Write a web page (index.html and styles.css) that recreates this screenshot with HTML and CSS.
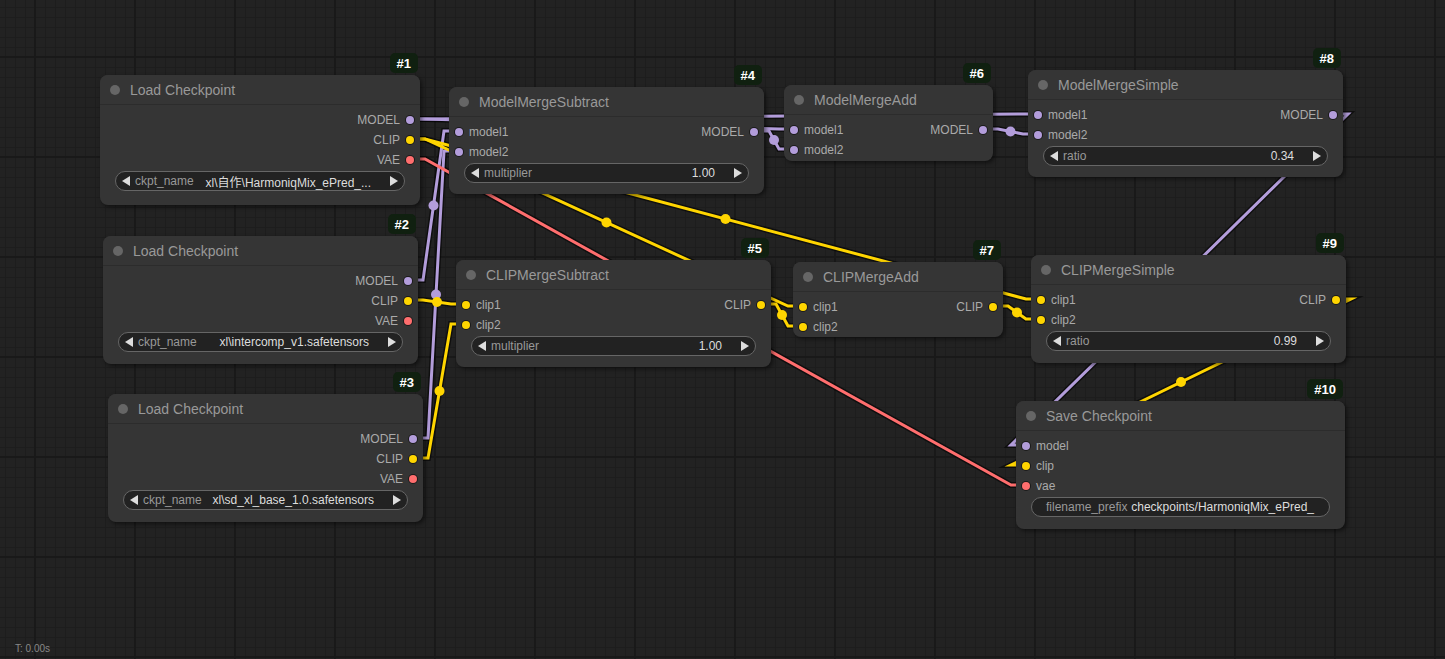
FILE: index.html
```html
<!DOCTYPE html>
<html>
<head>
<meta charset="utf-8">
<link rel="stylesheet" href="styles.css">
</head>
<body>
<div class="canvas">
  <svg class="links" width="1445" height="659" viewBox="0 0 1445 659">
    <g class="border">
      <polyline points="410,119 425,119 779,129 794,129"/>
      <polyline points="410,119 425,119 1023,114 1038,114"/>
      <polyline points="408,280 423,280 444,131 459,131"/>
      <polyline points="413,438 428,438 444,151 459,151"/>
      <polyline points="754,131 769,131 779,149 794,149"/>
      <polyline points="983,129 998,129 1023,134 1038,134"/>
      <polyline points="1333,114 1348,114 1011,445 1026,445"/>
      <polyline points="410,139 425,139 788,306 803,306"/>
      <polyline points="410,139 425,139 1026,299 1041,299"/>
      <polyline points="408,300 423,300 451,304 466,304"/>
      <polyline points="413,458 428,458 451,324 466,324"/>
      <polyline points="761,304 776,304 788,326 803,326"/>
      <polyline points="993,306 1008,306 1026,319 1041,319"/>
      <polyline points="1336,299 1351,299 1011,465 1026,465"/>
      <polyline points="410,159 425,159 1011,485 1026,485"/>
    </g>
    <g class="model">
      <polyline points="410,119 425,119 779,129 794,129"/>
      <polyline points="410,119 425,119 1023,114 1038,114"/>
      <polyline points="408,280 423,280 444,131 459,131"/>
      <polyline points="413,438 428,438 444,151 459,151"/>
      <polyline points="754,131 769,131 779,149 794,149"/>
      <polyline points="983,129 998,129 1023,134 1038,134"/>
      <polyline points="1333,114 1348,114 1011,445 1026,445"/>
      <circle cx="602" cy="124" r="5"/>
      <circle cx="724" cy="116.5" r="5"/>
      <circle cx="433.5" cy="205.5" r="5"/>
      <circle cx="436" cy="294.5" r="5"/>
      <circle cx="774" cy="140" r="5"/>
      <circle cx="1010.5" cy="131.5" r="5"/>
      <circle cx="1179.5" cy="279.5" r="5"/>
    </g>
    <g class="clip">
      <polyline points="410,139 425,139 788,306 803,306"/>
      <polyline points="410,139 425,139 1026,299 1041,299"/>
      <polyline points="408,300 423,300 451,304 466,304"/>
      <polyline points="413,458 428,458 451,324 466,324"/>
      <polyline points="761,304 776,304 788,326 803,326"/>
      <polyline points="993,306 1008,306 1026,319 1041,319"/>
      <polyline points="1336,299 1351,299 1011,465 1026,465"/>
      <circle cx="606.5" cy="222.5" r="5"/>
      <circle cx="725.5" cy="219" r="5"/>
      <circle cx="437" cy="302" r="5"/>
      <circle cx="439.5" cy="391" r="5"/>
      <circle cx="782" cy="315" r="5"/>
      <circle cx="1017" cy="312.5" r="5"/>
      <circle cx="1181" cy="382" r="5"/>
    </g>
    <g class="vae">
      <polyline points="410,159 425,159 1011,485 1026,485"/>
      <circle cx="718" cy="322" r="5"/>
    </g>
  </svg>

  <div class="node n1">
    <div class="badge">#1</div>
    <div class="title"><span class="tdot"></span>Load Checkpoint</div>
    <div class="body">
      <div class="row"><span class="out">MODEL<i class="dot model"></i></span></div>
      <div class="row"><span class="out">CLIP<i class="dot clip"></i></span></div>
      <div class="row"><span class="out">VAE<i class="dot vae"></i></span></div>
      <div class="widget"><i class="al"></i><span class="wl">ckpt_name</span><span class="wv">xl\自作\HarmoniqMix_ePred_...</span><i class="ar"></i></div>
    </div>
  </div>

  <div class="node n2">
    <div class="badge">#2</div>
    <div class="title"><span class="tdot"></span>Load Checkpoint</div>
    <div class="body">
      <div class="row"><span class="out">MODEL<i class="dot model"></i></span></div>
      <div class="row"><span class="out">CLIP<i class="dot clip"></i></span></div>
      <div class="row"><span class="out">VAE<i class="dot vae"></i></span></div>
      <div class="widget"><i class="al"></i><span class="wl">ckpt_name</span><span class="wv">xl\intercomp_v1.safetensors</span><i class="ar"></i></div>
    </div>
  </div>

  <div class="node n3">
    <div class="badge">#3</div>
    <div class="title"><span class="tdot"></span>Load Checkpoint</div>
    <div class="body">
      <div class="row"><span class="out">MODEL<i class="dot model"></i></span></div>
      <div class="row"><span class="out">CLIP<i class="dot clip"></i></span></div>
      <div class="row"><span class="out">VAE<i class="dot vae"></i></span></div>
      <div class="widget"><i class="al"></i><span class="wl">ckpt_name</span><span class="wv">xl\sd_xl_base_1.0.safetensors</span><i class="ar"></i></div>
    </div>
  </div>

  <div class="node n4">
    <div class="badge">#4</div>
    <div class="title"><span class="tdot"></span>ModelMergeSubtract</div>
    <div class="body">
      <div class="row"><span class="in"><i class="dot model"></i>model1</span><span class="out">MODEL<i class="dot model"></i></span></div>
      <div class="row"><span class="in"><i class="dot model"></i>model2</span></div>
      <div class="widget"><i class="al"></i><span class="wl">multiplier</span><span class="wv">1.00</span><i class="ar"></i></div>
    </div>
  </div>

  <div class="node n5">
    <div class="badge">#5</div>
    <div class="title"><span class="tdot"></span>CLIPMergeSubtract</div>
    <div class="body">
      <div class="row"><span class="in"><i class="dot clip"></i>clip1</span><span class="out">CLIP<i class="dot clip"></i></span></div>
      <div class="row"><span class="in"><i class="dot clip"></i>clip2</span></div>
      <div class="widget"><i class="al"></i><span class="wl">multiplier</span><span class="wv">1.00</span><i class="ar"></i></div>
    </div>
  </div>

  <div class="node n6">
    <div class="badge">#6</div>
    <div class="title"><span class="tdot"></span>ModelMergeAdd</div>
    <div class="body">
      <div class="row"><span class="in"><i class="dot model"></i>model1</span><span class="out">MODEL<i class="dot model"></i></span></div>
      <div class="row"><span class="in"><i class="dot model"></i>model2</span></div>
    </div>
  </div>

  <div class="node n7">
    <div class="badge">#7</div>
    <div class="title"><span class="tdot"></span>CLIPMergeAdd</div>
    <div class="body">
      <div class="row"><span class="in"><i class="dot clip"></i>clip1</span><span class="out">CLIP<i class="dot clip"></i></span></div>
      <div class="row"><span class="in"><i class="dot clip"></i>clip2</span></div>
    </div>
  </div>

  <div class="node n8">
    <div class="badge">#8</div>
    <div class="title"><span class="tdot"></span>ModelMergeSimple</div>
    <div class="body">
      <div class="row"><span class="in"><i class="dot model"></i>model1</span><span class="out">MODEL<i class="dot model"></i></span></div>
      <div class="row"><span class="in"><i class="dot model"></i>model2</span></div>
      <div class="widget"><i class="al"></i><span class="wl">ratio</span><span class="wv">0.34</span><i class="ar"></i></div>
    </div>
  </div>

  <div class="node n9">
    <div class="badge">#9</div>
    <div class="title"><span class="tdot"></span>CLIPMergeSimple</div>
    <div class="body">
      <div class="row"><span class="in"><i class="dot clip"></i>clip1</span><span class="out">CLIP<i class="dot clip"></i></span></div>
      <div class="row"><span class="in"><i class="dot clip"></i>clip2</span></div>
      <div class="widget"><i class="al"></i><span class="wl">ratio</span><span class="wv">0.99</span><i class="ar"></i></div>
    </div>
  </div>

  <div class="node n10">
    <div class="badge">#10</div>
    <div class="title"><span class="tdot"></span>Save Checkpoint</div>
    <div class="body">
      <div class="row"><span class="in"><i class="dot model"></i>model</span></div>
      <div class="row"><span class="in"><i class="dot clip"></i>clip</span></div>
      <div class="row"><span class="in"><i class="dot vae"></i>vae</span></div>
      <div class="widget text"><span class="wl">filename_prefix</span><span class="wv">checkpoints/HarmoniqMix_ePred_</span></div>
    </div>
  </div>

  <div class="timer">T: 0.00s</div>
</div>
</body>
</html>
```

FILE: styles.css
```css
* { box-sizing: border-box; }
html, body { margin: 0; padding: 0; background: #222; }
body { font-family: "Liberation Sans", Arial, "Noto Sans CJK JP", sans-serif; }

.canvas {
  position: relative;
  width: 1445px;
  height: 659px;
  overflow: hidden;
  background-color: #222;
  background-image:
    linear-gradient(to right, #191919 2px, transparent 2px),
    linear-gradient(to bottom, #191919 2px, transparent 2px),
    linear-gradient(to right, #1d1d1d 1px, transparent 1px),
    linear-gradient(to bottom, #1d1d1d 1px, transparent 1px);
  background-size: 100px 100px, 100px 100px, 10px 10px, 10px 10px;
  background-position: 34px 0, 0 56px, 5px 0, 0 7px;
}

.links { position: absolute; left: 0; top: 0; }
.links polyline { fill: none; stroke-linejoin: miter; stroke-miterlimit: 10; }
.links .border polyline { stroke: rgba(0,0,0,0.55); stroke-width: 6; }
.links .model polyline { stroke: #b39ddb; stroke-width: 3; }
.links .clip polyline { stroke: #ffd500; stroke-width: 3; }
.links .vae polyline { stroke: #ff6e6e; stroke-width: 3; }
.links .model circle { fill: #b39ddb; }
.links .clip circle { fill: #ffd500; }
.links .vae circle { fill: #ff6e6e; }

.node {
  position: absolute;
  background: #353535;
  border-radius: 8px;
  box-shadow: 2px 2px 4px rgba(0,0,0,0.5);
  display: flex;
  flex-direction: column;
}
.n1 { left: 100px; top: 75px; width: 320px; height: 130px; }
.n2 { left: 103px; top: 236px; width: 315px; height: 128px; }
.n3 { left: 108px; top: 394px; width: 315px; height: 128px; }
.n4 { left: 449px; top: 87px; width: 315px; height: 107px; }
.n5 { left: 456px; top: 260px; width: 315px; height: 107px; }
.n6 { left: 784px; top: 85px; width: 209px; height: 76px; }
.n7 { left: 793px; top: 262px; width: 210px; height: 75px; }
.n8 { left: 1028px; top: 70px; width: 315px; height: 107px; }
.n9 { left: 1031px; top: 255px; width: 315px; height: 108px; }
.n10 { left: 1016px; top: 401px; width: 329px; height: 128px; }

.badge {
  position: absolute;
  right: 2px;
  bottom: calc(100% + 2px);
  height: 20px;
  padding: 0 7px;
  border-radius: 5px;
  background: #102010;
  color: #fff;
  font-size: 13px;
  font-weight: bold;
  display: flex;
  align-items: center;
}

.title {
  height: 30px;
  flex: none;
  display: flex;
  align-items: center;
  gap: 10px;
  padding-left: 10px;
  color: #999;
  font-size: 14px;
  background: #353535;
  border-radius: 8px 8px 0 0;
  border-bottom: 1px solid #2c2c2c;
}
.tdot {
  width: 10px;
  height: 10px;
  border-radius: 50%;
  background: #666;
  flex: none;
}

.body {
  padding-top: 5px;
  display: flex;
  flex-direction: column;
}
.row {
  height: 20px;
  display: flex;
  align-items: center;
  padding: 0 6px;
  color: #aaa;
  font-size: 12px;
}
.in { display: flex; align-items: center; gap: 6px; }
.out { display: flex; align-items: center; gap: 6px; margin-left: auto; }

.dot {
  width: 8px;
  height: 8px;
  border-radius: 50%;
  flex: none;
  box-shadow: 0 0 0 1px rgba(0,0,0,0.5);
}
.dot.model { background: #b39ddb; }
.dot.clip { background: #ffd500; }
.dot.vae { background: #ff6e6e; }

.widget {
  margin: 1px 15px 0;
  height: 20px;
  border-radius: 10px;
  background: #222;
  border: 1px solid #666;
  display: flex;
  align-items: center;
  padding: 0 6px;
  font-size: 12px;
  white-space: nowrap;
}
.widget .wl { color: #999; margin-left: 5px; }
.widget .wv { color: #ddd; margin-left: auto; margin-right: 19px; }
.widget.text { padding: 0 15px 0 14px; }
.widget.text .wl { margin-left: 0; }
.widget.text .wv { margin-right: 0; }

.al, .ar {
  width: 8px;
  height: 10px;
  background: #ddd;
  flex: none;
}
.al { clip-path: polygon(100% 0, 0 50%, 100% 100%); }
.ar { clip-path: polygon(0 0, 100% 50%, 0 100%); }

.timer {
  position: absolute;
  left: 15px;
  top: 643px;
  color: #888;
  font-size: 10px;
}
```
